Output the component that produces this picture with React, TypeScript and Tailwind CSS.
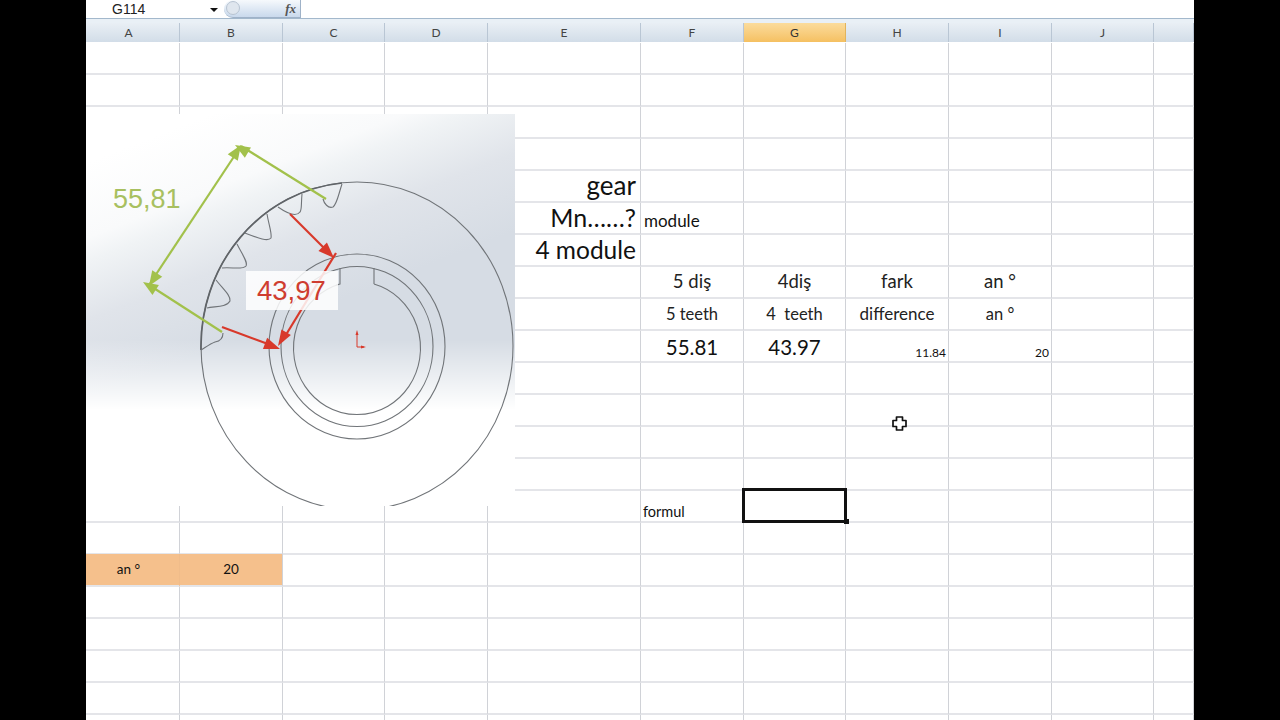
const COLUMNS = ['A', 'B', 'C', 'D', 'E', 'F', 'G', 'H', 'I', 'J', ''];
const ROW_COUNT = 22;

interface Cell {
  text: string;
  className: string;
}

// row index (0 = first row under the header) + column letter
const CELLS: Record<string, Cell> = {
  '4E': { text: 'gear', className: 'justify-end pr-[4px] pb-[2px] text-[26px] text-[#111]' },
  '5E': { text: 'Mn……?', className: 'justify-end pr-[4px] text-[25px] text-[#111]' },
  '5F': { text: 'module', className: 'justify-start pl-[3px] pt-[5px] text-[17px] text-[#111]' },
  '6E': { text: '4 module', className: 'justify-end pr-[4px] text-[24.5px] text-[#111]' },
  '7F': { text: '5 diş', className: 'justify-center text-[18.5px] text-[#222]' },
  '7G': { text: '4diş', className: 'justify-center text-[18.5px] text-[#222]' },
  '7H': { text: 'fark', className: 'justify-center text-[18.5px] text-[#222]' },
  '7I': { text: 'an °', className: 'justify-center text-[18.5px] text-[#222]' },
  '8F': { text: '5 teeth', className: 'justify-center text-[16.5px] text-[#222]' },
  '8G': { text: '4  teeth', className: 'justify-center text-[16.5px] text-[#222] whitespace-pre' },
  '8H': { text: 'difference', className: 'justify-center text-[17px] text-[#222]' },
  '8I': { text: 'an °', className: 'justify-center text-[16.5px] text-[#222]' },
  '9F': { text: '55.81', className: 'justify-center pt-[2px] text-[20.5px] text-[#111]' },
  '9G': { text: '43.97', className: 'justify-center pt-[2px] text-[20.5px] text-[#111]' },
  '9H': { text: '11.84', className: 'justify-end pr-[2px] pt-[14px] text-[12px] text-[#111]' },
  '9I': { text: '20', className: 'justify-end pr-[2px] pt-[14px] text-[12px] text-[#111]' },
  '14F': { text: 'formul', className: 'justify-start pl-[2px] pt-[12px] text-[14.5px] text-[#111]' },
  '16A': { text: 'an °', className: '-mt-px justify-center pr-[8px] text-[13.5px] text-[#111] bg-[#f5c08c] border-r-[#f0bc8a]' },
  '16B': { text: '20', className: '-mt-px justify-center text-[13.5px] text-[#111] bg-[#f5c08c]' },
};

function arrowHead(tipX: number, tipY: number, fromX: number, fromY: number, length = 15, half = 5.5) {
  const dx = fromX - tipX;
  const dy = fromY - tipY;
  const d = Math.hypot(dx, dy);
  const ux = dx / d;
  const uy = dy / d;
  const bx = tipX + ux * length;
  const by = tipY + uy * length;
  return `${tipX},${tipY} ${bx - uy * half},${by + ux * half} ${bx + uy * half},${by - ux * half}`;
}

function GearPicture() {
  const line = '#707478';
  const green = '#a2c14b';
  const red = '#d8392b';
  return (
    <svg className="absolute left-0 top-[72px] h-[392px] w-[429px]" viewBox="86 114 429 392">
      <defs>
        <linearGradient id="band" gradientUnits="userSpaceOnUse" x1="170" y1="130" x2="250" y2="335">
          <stop offset="0" stopColor="#ffffff" />
          <stop offset="0.32" stopColor="#f9fafb" />
          <stop offset="0.42" stopColor="#f0f3f5" />
          <stop offset="0.67" stopColor="#e0e4ea" />
          <stop offset="1" stopColor="#d6dce4" />
        </linearGradient>
        <linearGradient id="fade" gradientUnits="userSpaceOnUse" x1="0" y1="340" x2="0" y2="410">
          <stop offset="0" stopColor="#ffffff" stopOpacity="0" />
          <stop offset="1" stopColor="#ffffff" />
        </linearGradient>
      </defs>
      <rect x="86" y="114" width="429" height="392" fill="url(#band)" />
      <rect x="86" y="340" width="429" height="166" fill="url(#fade)" />

      <g fill="none" stroke={line} strokeWidth="1.1">
        <ellipse cx="357" cy="346" rx="156" ry="164" />
        <ellipse cx="357" cy="346.5" rx="88" ry="92.5" />
        <ellipse cx="357" cy="346.5" rx="76" ry="80" />
        <path d="M374 284 A63.5 66.5 0 1 1 340 284 L340 268 M374 284 L374 268 M340 284 L336 285" />
        <path d="M201 350 A156 164 0 0 1 342 183" strokeWidth="1.7" stroke="#606468" />
        {/* tooth gaps */}
        <path d="M342 184 C338 196 337 204 333 207 C328 209 324 203 323 199" />
        <path d="M302 194 C301 204 302 210 300 212 C297 216 291 216 278 207" />
        <path d="M267 214 C269 226 272 233 271 238 C268 242 258 238 245 233" />
        <path d="M237 244 C243 256 248 262 246 266 C243 270 232 267 222 268" />
        <path d="M216 280 C224 290 231 296 230 301 C226 308 214 306 207 308" />
        <path d="M223 333 C223 338 221 341 215 342 C210 344 206 347 201 350" />
      </g>

      {/* 55,81 dimension */}
      <g stroke={green} strokeWidth="2.2" fill={green}>
        <line x1="241" y1="146" x2="149" y2="285" />
        <line x1="241" y1="146" x2="326" y2="199" />
        <line x1="149" y1="285" x2="222" y2="332" />
        <polygon strokeWidth="0" points={arrowHead(241, 145, 149, 285, 15, 6)} />
        <polygon strokeWidth="0" points={arrowHead(235, 145, 326, 199, 15, 6)} />
        <polygon strokeWidth="0" points={arrowHead(149, 286, 241, 146, 15, 6)} />
        <polygon strokeWidth="0" points={arrowHead(143, 282, 222, 332, 15, 6)} />
      </g>
      <text x="113" y="208" fontFamily="'Liberation Sans', sans-serif" fontSize="27" fill="#a8c060">
        55,81
      </text>

      {/* 43,97 dimension */}
      <g stroke={red} strokeWidth="2.2" fill={red}>
        <line x1="290" y1="214" x2="328" y2="252" />
        <line x1="222" y1="327" x2="268" y2="344" />
        <line x1="336" y1="253" x2="284" y2="338" />
        <polygon strokeWidth="0" points={arrowHead(334, 258, 290, 214, 16, 6)} />
        <polygon strokeWidth="0" points={arrowHead(280, 349, 222, 327, 16, 6)} />
        <polygon strokeWidth="0" points={arrowHead(278, 346, 332, 255, 16, 5.5)} />
      </g>
      <rect x="246" y="271" width="92" height="39" fill="#ffffff" fillOpacity="0.84" />
      <text x="257" y="300" fontFamily="'Liberation Sans', sans-serif" fontSize="27.5" fill="#cf3d30">
        43,97
      </text>

      {/* origin mark */}
      <g stroke="#d8392b" strokeWidth="1" fill="#d8392b">
        <path d="M357 334 L357 347 L364 347" fill="none" />
        <polygon strokeWidth="0" points="357,330 355.5,335 358.5,335" />
        <polygon strokeWidth="0" points="366,347 361,345.5 361,348.5" />
      </g>
    </svg>
  );
}

function PlusCursor() {
  return (
    <svg className="absolute left-[806px] top-[374px] h-[15px] w-[15px]" viewBox="0 0 15 15">
      <path
        d="M4.5 1 H10.5 V4.5 H14 V10.5 H10.5 V14 H4.5 V10.5 H1 V4.5 H4.5 Z"
        fill="#fff"
        stroke="#111"
        strokeWidth="1.7"
        strokeLinejoin="round"
      />
    </svg>
  );
}

function FormulaBar() {
  return (
    <div className="flex h-[18px] bg-white">
      <div className="relative w-[138px] overflow-hidden">
        <span className="absolute left-[26px] top-[1px] font-['Liberation_Sans'] text-[14px] leading-[16px] text-[#222]">G114</span>
        <span className="absolute left-[124px] top-[8px] h-0 w-0 border-x-[4px] border-t-[4px] border-x-transparent border-t-[#111]" />
      </div>
      <div className="relative w-[77px] rounded-l-[9px] border-b border-r border-[#9fb2c8] bg-gradient-to-b from-[#f6f9fc] to-[#c9d9ec]">
        <span className="absolute left-[2px] top-[1px] h-[14px] w-[14px] rounded-full border border-[#b8c4d2] bg-[#dfe6ee]" />
        <span className="absolute right-[4px] top-0 font-['Liberation_Serif'] text-[13px] font-bold italic leading-[17px] text-[#555]">fx</span>
      </div>
      <div className="flex-1" />
    </div>
  );
}

export default function App() {
  return (
    <div className="flex h-[720px] w-full justify-center overflow-hidden bg-black font-['Lato','Liberation_Sans',sans-serif]">
      <div className="flex h-full w-[1108px] flex-col bg-white">
        <FormulaBar />
        <div className="h-[5px] border-t border-[#a3b8cc] bg-[#e9f0f6]" />
        {/* column headers */}
        <div className="grid h-[19px] grid-cols-[94px_103px_102px_103px_153px_103px_102px_103px_103px_102px_40px] border-b-2 border-[#b4c2d1]">
          {COLUMNS.map((c) => (
            <div
              key={c || 'K'}
              className={
                c === 'G'
                  ? 'flex items-center justify-center border-r border-[#e2b45c] bg-gradient-to-b from-[#fbdc9c] to-[#f5c061] pt-px text-[12px] text-[#333]'
                  : c === 'A'
                    ? 'flex items-center justify-center border-r border-[#b9c6d4] bg-gradient-to-b from-[#e9eff5] to-[#d2dde8] pr-[8px] pt-px text-[12px] text-[#444]'
                    : 'flex items-center justify-center border-r border-[#b9c6d4] bg-gradient-to-b from-[#e9eff5] to-[#d2dde8] pt-px text-[12px] text-[#444]'
              }
            >
              {c}
            </div>
          ))}
        </div>
        {/* sheet body */}
        <div className="relative flex-1 overflow-hidden">
          <div className="grid auto-rows-[32px] grid-cols-[94px_103px_102px_103px_153px_103px_102px_103px_103px_102px_40px] pt-px">
            {Array.from({ length: ROW_COUNT }).map((_, row) =>
              COLUMNS.map((c, col) => {
                const cell = CELLS[`${row}${c}`];
                return (
                  <div
                    key={`${row}-${col}`}
                    className={`flex items-center whitespace-nowrap border-b-2 border-r border-b-[#e4e5e9] border-r-[#d0d2d7] ${cell ? cell.className : ''}`}
                  >
                    {cell?.text}
                  </div>
                );
              }),
            )}
          </div>
          <GearPicture />
          {/* selected cell G15 */}
          <div className="absolute left-[656px] top-[446px] h-[35px] w-[105px] border-[3px] border-[#111]" />
          <div className="absolute left-[758px] top-[477px] h-[5px] w-[5px] bg-[#111]" />
          <PlusCursor />
        </div>
      </div>
    </div>
  );
}
